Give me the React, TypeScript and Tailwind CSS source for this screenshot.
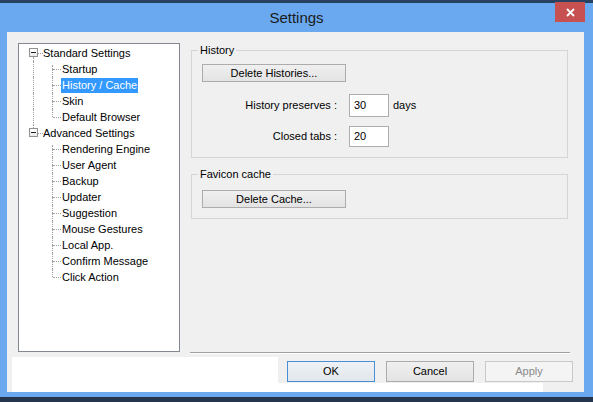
import React from "react";

const DOT = "border-dotted border-[#a0a0a0]";

function RootRow({ label, hasPrev, hasNext }: { label: string; hasPrev: boolean; hasNext: boolean }) {
  return (
    <div className="flex h-[16px]">
      <div className="w-[10px]" />
      <div className="flex w-[9px] flex-col">
        <div className="flex h-[3px] justify-center">
          {hasPrev && <div className={`h-full border-l ${DOT}`} />}
        </div>
        <div className="flex h-[9px] w-[9px] items-center justify-center border border-[#919191] bg-linear-to-b from-white to-[#eaeaea]">
          <div className="h-[1px] w-[5px] bg-[#222]" />
        </div>
        <div className="flex flex-1 justify-center">
          {hasNext && <div className={`h-full border-l ${DOT}`} />}
        </div>
      </div>
      <div className="w-[5px]">
        <div className={`mt-[8px] border-t ${DOT}`} />
      </div>
      <span className="leading-[16px]">{label}</span>
    </div>
  );
}

function ChildRow({
  label,
  parentLine,
  first,
  last,
  selected,
}: {
  label: string;
  parentLine: boolean;
  first: boolean;
  last: boolean;
  selected?: boolean;
}) {
  return (
    <div className="flex h-[16px]">
      <div className="w-[14px]" />
      <div className={`w-[1px] ${parentLine ? `border-l ${DOT}` : ""}`} />
      <div className="w-[18px]" />
      <div className="flex w-[1px] flex-col">
        {first ? (
          <div className={`mt-[4px] h-[4px] border-l ${DOT}`} />
        ) : (
          <div className={`h-[8px] border-l ${DOT}`} />
        )}
        <div className={`flex-1 ${last ? "" : `border-l ${DOT}`}`} />
      </div>
      <div className="w-[8px]">
        <div className={`mt-[8px] border-t ${DOT}`} />
      </div>
      <div className="flex items-center">
        <span
          className={`h-[15px] px-[1px] leading-[15px] ${selected ? "bg-[#3399ff] text-white" : ""}`}
        >
          {label}
        </span>
      </div>
    </div>
  );
}

function Btn({
  children,
  className = "",
  variant = "normal",
}: {
  children: React.ReactNode;
  className?: string;
  variant?: "normal" | "default" | "disabled";
}) {
  const v =
    variant === "default"
      ? "border-[#4a8fd6] bg-linear-to-b from-[#eef2f6] to-[#e2e7ec] text-black"
      : variant === "disabled"
        ? "border-[#c9c9c9] bg-[#f4f4f4] text-[#8a8a8a]"
        : "border-[#acacac] bg-linear-to-b from-[#f0f0f0] to-[#e3e3e3] text-black";
  return (
    <div className={`flex items-center justify-center border text-[11px] ${v} ${className}`}>{children}</div>
  );
}

export default function App() {
  const standard = ["Startup", "History / Cache", "Skin", "Default Browser"];
  const advanced = [
    "Rendering Engine",
    "User Agent",
    "Backup",
    "Updater",
    "Suggestion",
    "Mouse Gestures",
    "Local App.",
    "Confirm Message",
    "Click Action",
  ];

  return (
    <div className="flex h-[402px] w-[593px] flex-col overflow-hidden bg-[#6aa8f0] font-['Liberation_Sans',Arial,sans-serif] text-black">
      <div className="h-[3px] bg-[#2a4262]" />
      <div className="relative flex h-[29px] items-center justify-center">
        <span className="text-[15px] leading-none text-[#1b1b1b]">Settings</span>
        <div className="absolute right-[8px] top-[-1px] flex h-[20px] w-[30px] items-center justify-center bg-[#c75050]">
          <svg width="9" height="9" viewBox="0 0 9 9">
            <path d="M1 1L8 8M8 1L1 8" stroke="white" strokeWidth="1.8" />
          </svg>
        </div>
      </div>

      <div className="ml-[7px] flex h-[360px] w-[577px] flex-col bg-[#f0f0f0] text-[11px]">
        <div className="flex h-[322px] pl-[11px] pt-[11px]">
          <div className="h-[309px] w-[162px] border border-[#828790] bg-white pt-[1px]">
            <RootRow label="Standard Settings" hasPrev={false} hasNext={true} />
            {standard.map((s, i) => (
              <ChildRow
                key={s}
                label={s}
                parentLine={true}
                first={i === 0}
                last={i === standard.length - 1}
                selected={s === "History / Cache"}
              />
            ))}
            <RootRow label="Advanced Settings" hasPrev={true} hasNext={false} />
            {advanced.map((s, i) => (
              <ChildRow key={s} label={s} parentLine={false} first={i === 0} last={i === advanced.length - 1} />
            ))}
          </div>

          <div className="ml-[10px] flex h-[311px] w-[380px] flex-col">
            <fieldset className="ml-[1px] w-[377px] border border-[#d5d5d5] px-0 pb-[10px] pt-[6px]">
              <legend className="ml-[6px] px-[2px] text-[11px] leading-[15px]">History</legend>
              <div className="flex flex-col px-[10px]">
                <Btn className="h-[18px] w-[144px]">Delete Histories...</Btn>
                <div className="mt-[12px] flex h-[23px] items-center">
                  <span className="w-[135px] text-right">History preserves :</span>
                  <div className="ml-[12px] flex h-[23px] w-[40px] items-center border border-[#abadb3] bg-white pl-[4px]">
                    30
                  </div>
                  <span className="ml-[4px]">days</span>
                </div>
                <div className="mt-[9px] flex h-[21px] items-center">
                  <span className="w-[135px] text-right">Closed tabs :</span>
                  <div className="ml-[12px] flex h-[21px] w-[40px] items-center border border-[#abadb3] bg-white pl-[4px]">
                    20
                  </div>
                </div>
              </div>
            </fieldset>

            <fieldset className="ml-[1px] mt-[9px] w-[377px] border border-[#d5d5d5] px-0 pb-[10px] pt-[8px]">
              <legend className="ml-[6px] px-[2px] text-[11px] leading-[15px]">Favicon cache</legend>
              <div className="flex flex-col px-[10px]">
                <Btn className="h-[18px] w-[144px]">Delete Cache...</Btn>
              </div>
            </fieldset>

            <div className="mt-auto h-[1px] bg-[#a0a0a0]" />
            <div className="h-[1px] bg-white" />
          </div>
        </div>

        <div className="flex h-[38px]">
          <div className="ml-[5px] mt-[3px] h-[35px] w-[266px] bg-white" />
          <div className="mt-[3px] flex flex-col">
            <div className="flex pl-[9px] pt-[4px]">
              <Btn variant="default" className="h-[21px] w-[88px]">
                OK
              </Btn>
              <Btn className="ml-[11px] h-[21px] w-[88px]">Cancel</Btn>
              <Btn variant="disabled" className="ml-[11px] h-[21px] w-[88px]">
                Apply
              </Btn>
            </div>
            <div className="mt-[1px] h-[9px] w-[265px] bg-white" />
          </div>
        </div>
      </div>

      <div className="h-[5px] bg-[#6aa8f0]" />
      <div className="h-[5px] bg-[#24354d]" />
    </div>
  );
}
